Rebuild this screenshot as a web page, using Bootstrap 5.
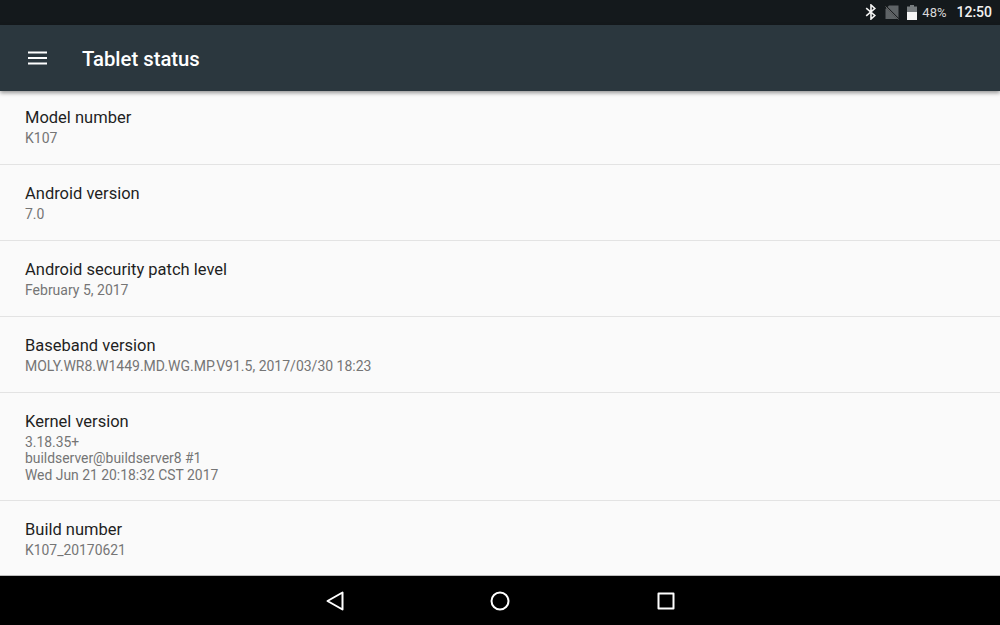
<!doctype html>
<html lang="en"><head><meta charset="utf-8"><title>Tablet status</title>
<link href="https://cdn.jsdelivr.net/npm/bootstrap@5.3.0/dist/css/bootstrap.min.css" rel="stylesheet">
<style>
html,body{height:625px;overflow:hidden}
body{font-family:Roboto,"Liberation Sans",sans-serif;background:#fafafa}
.shell{height:625px}
.statusbar{height:25px;background:#14191c;color:#f2f2f2;padding-right:8px}
.bt-ico{margin-right:8px}
.sim-ico{margin-right:8px}
.pct{font-size:13px;margin:0 10px 0 5px;color:#d8d8d8}
.clock{font-size:14px;font-weight:500}
.toolbar{height:66px;background:#2b373e;color:#fff;box-shadow:0 2px 4px rgba(0,0,0,.4);z-index:2;position:relative;padding-left:28px}
.toolbar-title{font-size:20.3px;font-weight:500;margin:2px 0 0 34px;line-height:1}
.rows{flex:1 1 auto;min-height:0;background:#fafafa}
.setrow{padding:18px 25px 0;height:76px;border-bottom:1px solid #e3e3e3}
.setrow.firstrow{height:74px;padding-top:16px}
.setrow.tallrow{height:108px}
.setrow.tallrow .val{margin-top:2px;line-height:16.5px;font-size:13.9px}
.setrow.lastrow{height:75px;border-bottom:0}
.setrow.lastrow .val{font-size:13.9px}
.ttl{font-size:16.5px;line-height:21px;color:#1f1f1f}
.val{font-size:14px;line-height:17px;color:#757575;margin-top:2px}
.navbottom{height:50px;background:#000;border-top:1px solid #bdbdbd}
.navbottom svg{display:block}
.homeicon{margin:0 147px 0 146px}
</style></head><body>
<div class="shell d-flex flex-column">
 <div class="statusbar d-flex align-items-center justify-content-end">
  <svg class="bt-ico" width="12" height="16" viewBox="0 0 12 16" fill="none" stroke="#f5f5f5" stroke-width="1.6"><path d="M1.2 4.2 9.8 11.5 6 15V1L9.8 4.5 1.2 11.8"/></svg>
  <svg class="sim-ico" width="14" height="15" viewBox="0 0 14 15"><path d="M4 .5h9.5V14H.5V4z" fill="#5e6366"/><path d="M0 .5 14 14.5" stroke="#14191c" stroke-width="1.5"/><path d="M.5 1.5 13.5 14.5" stroke="#777" stroke-width=".8"/></svg>
  <svg width="10" height="15" viewBox="0 0 10 15"><path d="M3 0h4v2H3z" fill="#777c7f"/><path d="M0 1.5h10V7H0z" fill="#777c7f"/><path d="M0 7h10v8H0z" fill="#f5f5f5"/></svg>
  <span class="pct">48%</span><span class="clock">12:50</span>
 </div>
 <div class="toolbar d-flex align-items-center">
  <svg width="20" height="14" viewBox="0 0 20 14"><path d="M0 1.5h19M0 7h19M0 12.5h19" stroke="#fff" stroke-width="2"/></svg>
  <h1 class="toolbar-title">Tablet status</h1>
 </div>
 <div class="rows">
  <div class="setrow firstrow"><div class="ttl">Model number</div><div class="val">K107</div></div>
  <div class="setrow"><div class="ttl">Android version</div><div class="val">7.0</div></div>
  <div class="setrow"><div class="ttl">Android security patch level</div><div class="val">February 5, 2017</div></div>
  <div class="setrow"><div class="ttl">Baseband version</div><div class="val">MOLY.WR8.W1449.MD.WG.MP.V91.5, 2017/03/30 18:23</div></div>
  <div class="setrow tallrow"><div class="ttl">Kernel version</div><div class="val">3.18.35+<br>buildserver@buildserver8 #1<br>Wed Jun 21 20:18:32 CST 2017</div></div>
  <div class="setrow lastrow"><div class="ttl">Build number</div><div class="val">K107_20170621</div></div>
 </div>
 <div class="navbottom d-flex align-items-center justify-content-center">
  <svg width="18" height="20" viewBox="0 0 18 20" fill="none" stroke="#fff" stroke-width="2" stroke-linejoin="round"><path d="M16.5 1.5v17L1.5 10z"/></svg>
  <svg class="homeicon" width="20" height="20" viewBox="0 0 20 20" fill="none" stroke="#fff" stroke-width="2"><circle cx="10" cy="10" r="8.5"/></svg>
  <svg width="18" height="18" viewBox="0 0 18 18" fill="none" stroke="#fff" stroke-width="2" stroke-linejoin="round"><path d="M1.5 1.5h15v15h-15z"/></svg>
 </div>
</div>
<script src="https://cdn.jsdelivr.net/npm/bootstrap@5.3.0/dist/js/bootstrap.bundle.min.js"></script>
</body></html>
